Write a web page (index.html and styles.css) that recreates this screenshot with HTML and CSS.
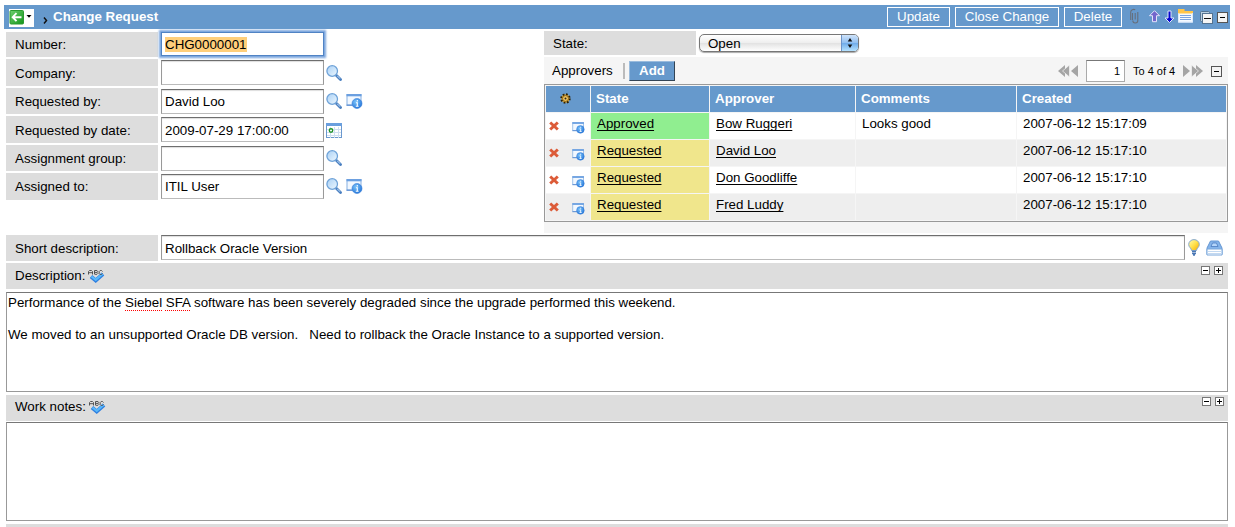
FILE: index.html
```html
<!DOCTYPE html>
<html lang="en">
<head>
<meta charset="utf-8">
<title>Change Request</title>
<link rel="stylesheet" href="styles.css">
</head>
<body>
<svg class="defs" width="0" height="0">
  <defs>
    <linearGradient id="lens" x1="0" y1="0" x2="1" y2="1"><stop offset="0" stop-color="#a9d0f5"/><stop offset="1" stop-color="#eef8ff"/></linearGradient>
    <linearGradient id="green" x1="0" y1="0" x2="1" y2="1"><stop offset="0" stop-color="#6fd070"/><stop offset="1" stop-color="#12941a"/></linearGradient>
    <radialGradient id="info" cx=".4" cy=".35" r=".7"><stop offset="0" stop-color="#7cc4fa"/><stop offset="1" stop-color="#2273d8"/></radialGradient>
    <linearGradient id="bulb" x1="0" y1="0" x2="1" y2="1"><stop offset="0" stop-color="#fffbb0"/><stop offset=".5" stop-color="#ffe04a"/><stop offset="1" stop-color="#f5a800"/></linearGradient>
    <symbol id="i-search" viewBox="0 0 16 16"><path d="M10.500 10.500l4 3.900" stroke="#4a7fc0" stroke-width="2.800" stroke-linecap="round"/><path d="M11.200 10.800l3 2.900" stroke="#9fc3ea" stroke-width="1.100"/><circle cx="6.200" cy="6" r="5.300" fill="url(#lens)" stroke="#6ea2d8" stroke-width="1.300"/></symbol>
    <symbol id="i-info" viewBox="0 0 17 16"><rect x="1" y="1.500" width="14" height="10.500" fill="#f2f8ff" stroke="#86b0e2"/><path d="M.5 2.200h15" stroke="#6a9fe0" stroke-width="2.200"/><path d="M.5 12.200h6" stroke="#4a80cc"/><circle cx="11" cy="10.500" r="5" fill="url(#info)" stroke="#3a80d8" stroke-width=".6"/><path d="M11.300 7v1.400M10 9.800h1.300v3.200M9.800 13.200h2.800" stroke="#fff" stroke-width="1.100" fill="none"/></symbol>
    <symbol id="i-spell" viewBox="0 0 17 14"><path d="M3 7.500l4.700 4L15 5" fill="none" stroke="#2f7fe0" stroke-width="3.800"/><path d="M3.500 7.500l4.200 3.300L14.500 5" fill="none" stroke="#58b8fa" stroke-width="2.200"/><path d="M.5 5.500v-3l1-1h2l1 1v3M.5 3.700h4M6.500 5V1.500H9l.7.9-.7 1H6.500M9 3.400l.9 1L9 5.300H6.500M14.500 2.500l-1-1h-1.300l-1 1v2l1 1h1.300l1-1" fill="none" stroke="#555" stroke-width="1"/></symbol>
    <symbol id="i-x" viewBox="0 0 10 10"><path d="M1.200 1.500l7.600 7M8.800 1.500l-7.600 7" stroke="#dc5b38" stroke-width="3"/></symbol>
    <symbol id="i-minus" viewBox="0 0 9 9"><rect x=".5" y=".5" width="8" height="8" fill="#fff" stroke="#777"/><path d="M2 4.500h5" stroke="#000"/></symbol>
    <symbol id="i-plus" viewBox="0 0 9 9"><rect x=".5" y=".5" width="8" height="8" fill="#fff" stroke="#777"/><path d="M2 4.500h5M4.500 2v5" stroke="#000"/></symbol>
    <symbol id="i-box" viewBox="0 0 11 11"><rect x=".5" y=".5" width="10" height="10" fill="#f4f4f4" stroke="#555"/><path d="M3 5.500h5" stroke="#000"/></symbol>
  </defs>
</svg>
<header class="bar">
  <div class="back">
    <svg width="25" height="18" viewBox="0 0 25 18"><rect width="25" height="18" fill="#fff"/><rect x="1" y="1.500" width="13.500" height="13.500" rx="1" fill="url(#green)" stroke="#2a9a30"/><path d="M7.500 4.200L3.700 8.200l3.800 4M4 8.200h8.500" stroke="#fff" stroke-width="1.900" fill="none"/><path d="M17.500 6h5L20 8.800z" fill="#000"/></svg>
  </div>
  <svg class="chev" width="5" height="7" viewBox="0 0 5 7"><path d="M1 .5l2.500 3L1 6.500" fill="none" stroke="#111" stroke-width="1.500"/></svg>
  <h1 class="title">Change Request</h1>
  <button class="action update">Update</button>
  <button class="action close">Close Change</button>
  <button class="action delete">Delete</button>
  <svg class="tools" width="102" height="18" viewBox="0 0 102 18">
    <path d="M4.500 5v7M9.800 4v8.500a2.500 2.500 0 0 1-5 0M2.700 12V4a3 3 0 0 1 4.500-2.200M7.200 5v6.500" fill="none" stroke="#666f7c" stroke-width="1.100"/>
    <path d="M26.500 2.700l5 5h-3v6h-4v-6h-3z" fill="#7366cc" stroke="#e4e2fa"/>
    <path d="M41.500 14.500l-4.500-4.500h3v-7h3v7h3z" fill="#0606d0" stroke="#e0e6fa"/>
    <rect x="50" y="3" width="15" height="11.500" fill="#f6faff"/><path d="M50 1h6.500v2H65v2.500H50z" fill="#ffc54a"/><path d="M50.500 5.500v8.500h14V5" fill="none" stroke="#dbe9fb"/><path d="M52 7.500h11M52 9.500h11M52 11.500h11" stroke="#7ba4e0"/>
    <rect x="72.500" y="3.500" width="9" height="10" rx="1" fill="#b9cfe0" stroke="#547391"/><rect x="74.500" y="5.500" width="10" height="10" fill="#f4f4f4" stroke="#547391"/><path d="M76 10.500h7" stroke="#111"/>
    <rect x="89.500" y="4.500" width="10" height="10" fill="#f4f4f4" stroke="#555"/><path d="M92 9.500h5" stroke="#000"/>
  </svg>
</header>

<main class="form">
  <div class="columns">
    <section class="fields">
      <div class="field r1"><label class="label">Number:</label><div class="input focus"><span class="sel">CHG0000001</span></div></div>
      <div class="field r2"><label class="label">Company:</label><div class="input"></div><svg class="ico"><use href="#i-search"/></svg></div>
      <div class="field r3"><label class="label">Requested by:</label><div class="input">David Loo</div><svg class="ico"><use href="#i-search"/></svg><svg class="ico info"><use href="#i-info"/></svg></div>
      <div class="field r4"><label class="label">Requested by date:</label><div class="input">2009-07-29 17:00:00</div><svg class="ico date" viewBox="0 0 16 16"><rect x=".5" y=".5" width="15" height="14" fill="#fff" stroke="#6a98cf"/><path d="M0 1.500h16" stroke="#6a9fde" stroke-width="3"/><path d="M1 6.500h14M1 9.500h14M1 12.500h14M4.500 4v11M8.500 4v11M12.500 4v11" stroke="#cfdff0"/><circle cx="5" cy="7.500" r="1.700" fill="#fff" stroke="#22932a" stroke-width="1.400"/></svg></div>
      <div class="field r5"><label class="label">Assignment group:</label><div class="input"></div><svg class="ico"><use href="#i-search"/></svg></div>
      <div class="field r6"><label class="label">Assigned to:</label><div class="input">ITIL User</div><svg class="ico"><use href="#i-search"/></svg><svg class="ico info"><use href="#i-info"/></svg></div>
    </section>

    <section class="side">
      <div class="state"><label class="label">State:</label>
        <div class="select"><span class="value">Open</span><span class="knob"><svg width="8" height="12" viewBox="0 0 8 12"><path d="M4 1L6.300 4.500H1.700zM4 11L6.300 7.500H1.700z" fill="#111"/></svg></span></div>
      </div>
      <div class="approvers">
        <div class="listbar">
          <span class="name">Approvers</span><span class="sep"></span><button class="add">Add</button>
          <div class="pager">
            <svg width="21" height="12" viewBox="0 0 21 12"><path d="M7 0v12L0 6zM20 0v12L13 6z" fill="#a5a5a5"/><path d="M11.500 0v12L4.500 6z" fill="#a5a5a5" stroke="#f5f5f5" stroke-width=".7"/></svg>
            <span class="page">1</span><span class="count">To 4 of 4</span>
            <svg width="21" height="12" viewBox="0 0 21 12"><path d="M14 0v12l7-6z" fill="#a5a5a5"/><path d="M9.500 0v12l7-6z" fill="#a5a5a5" stroke="#f5f5f5" stroke-width=".7"/><path d="M1 0v12l7-6z" fill="#a5a5a5"/></svg>
            <svg class="fold" width="11" height="11"><use href="#i-box"/></svg>
          </div>
        </div>
        <div class="table">
          <div class="th gear"><svg width="11" height="11" viewBox="0 0 11 11"><circle cx="5.500" cy="5.500" r="4.200" fill="#d9a22c" stroke="#2c2006" stroke-width="2" stroke-dasharray="1.700 1.600"/><circle cx="5.500" cy="5.500" r="2.900" fill="#f5c65c" stroke="#6b4c10" stroke-width=".7"/><circle cx="5.500" cy="5.500" r="1" fill="#222"/></svg></div>
          <div class="th">State</div><div class="th">Approver</div><div class="th">Comments</div><div class="th">Created</div>

          <div class="td acts"><svg class="x"><use href="#i-x"/></svg><svg class="i"><use href="#i-info"/></svg></div>
          <div class="td approved"><a>Approved</a></div><div class="td"><a>Bow Ruggeri</a></div><div class="td">Looks good</div><div class="td">2007-06-12 15:17:09</div>

          <div class="td alt acts"><svg class="x"><use href="#i-x"/></svg><svg class="i"><use href="#i-info"/></svg></div>
          <div class="td requested"><a>Requested</a></div><div class="td alt"><a>David Loo</a></div><div class="td alt"></div><div class="td alt">2007-06-12 15:17:10</div>

          <div class="td acts"><svg class="x"><use href="#i-x"/></svg><svg class="i"><use href="#i-info"/></svg></div>
          <div class="td requested"><a>Requested</a></div><div class="td"><a>Don Goodliffe</a></div><div class="td"></div><div class="td">2007-06-12 15:17:10</div>

          <div class="td alt acts"><svg class="x"><use href="#i-x"/></svg><svg class="i"><use href="#i-info"/></svg></div>
          <div class="td requested"><a>Requested</a></div><div class="td alt"><a>Fred Luddy</a></div><div class="td alt"></div><div class="td alt">2007-06-12 15:17:10</div>
        </div>
      </div>
    </section>
  </div>

  <div class="field short"><label class="label">Short description:</label><div class="input wide">Rollback Oracle Version</div>
    <svg class="bulb" width="12" height="17" viewBox="0 0 12 17"><path d="M3.500 11.500C3.500 9 .7 8.500.7 5.500a5.300 4.900 0 0 1 10.600 0c0 3-2.800 3.500-2.800 6z" fill="url(#bulb)" stroke="#86a9d0"/><path d="M4 12.500h4M4 14.500h4M5 16h2" stroke="#4b78b5" stroke-width="1.300"/></svg>
    <svg class="book" width="17" height="16" viewBox="0 0 17 16"><path d="M4.500 1h8l3.500 7v6.500H1V8z" fill="#84b4ea" stroke="#6496d2"/><path d="M1 9h15v6H1z" fill="#fff" stroke="#7aa8dc"/><path d="M2 11.500h14M2 13.500h14" stroke="#c3d9f1"/><path d="M5 6.500L6.500 3h4L12 6.500z" fill="#b5d6fa" stroke="#4b7cc0" stroke-width=".8"/></svg>
  </div>

  <div class="section first"><span>Description:</span><svg class="spell"><use href="#i-spell"/></svg>
    <div class="sizer"><svg width="9" height="9"><use href="#i-minus"/></svg><svg width="9" height="9"><use href="#i-plus"/></svg></div></div>
  <div class="area desc"><p class="line">Performance of the <span class="miss">Siebel</span> <span class="miss">SFA</span> software has been severely degraded since the upgrade performed this weekend.</p><p class="line">We moved to an unsupported Oracle DB version.   Need to rollback the Oracle Instance to a supported version.</p></div>

  <div class="section second"><span>Work notes:</span><svg class="spell"><use href="#i-spell"/></svg>
    <div class="sizer"><svg width="9" height="9"><use href="#i-minus"/></svg><svg width="9" height="9"><use href="#i-plus"/></svg></div></div>
  <div class="area notes"></div>
  <div class="section rest"></div>
</main>
</body>
</html>
```
FILE: styles.css
```css
* { box-sizing: border-box; }
html, body { height: 527px; overflow: hidden; }
body { margin: 0; padding: 5px 5px 0 4px; background: #fff; color: #000; font: 13.333px/16px "Liberation Sans", Arial, sans-serif; }
svg { display: block; flex: none; }
.defs { position: absolute; }
button { font: inherit; margin: 0; padding: 0; border-radius: 0; }

.bar { display: flex; height: 24px; background: #69c; color: #fff; padding-left: 5px; }
.back { margin-top: 4px; width: 25px; }
.chev { margin: 12px 5px 0 9px; }
.title { margin: 0; padding-top: 4px; font-size: 13.333px; line-height: 16px; flex: 1; }
.action { height: 20px; margin: 2px 5px 0 0; background: #69c; border: 1px solid #fff; color: #fff; }
.update { width: 63px; }
.close { width: 104px; }
.delete { width: 58px; margin-right: 6px; }
.tools { margin-top: 3px; }

.form { padding: 2px 2px 0; width: 1226px; }
.columns { display: flex; height: 204px; }
.fields { width: 538px; padding-top: 1px; }
.field { display: flex; margin-bottom: 2px; }
.r1 { height: 25px; }
.r2, .r4, .r6 { height: 27px; }
.r3, .r5 { height: 26px; }
.label { width: 152px; background: #ddd; padding-left: 9px; display: flex; align-items: center; flex: none; }
.r3 .label, .r5 .label, .short .label { padding-top: 1px; }
.r2 .label, .r4 .label { padding-top: 2px; }
.input { width: 163px; height: 25px; margin: 1px 0 0 3px; border: 1px solid #bbb; border-top: 1px solid #6e6e6e; border-left-color: #999; border-right-color: #999; padding: 4px 3px 0; background: #fff; box-shadow: inset 0 1px 1px #ddd; white-space: nowrap; flex: none; }
.r4 .input { padding-top: 5px; }
.focus { margin: 0 0 0 3px; height: 24px; border-color: #5083c4; box-shadow: 0 0 2px 2px #79a4dd; }
.sel { background: #ffcf7b; }
.ico { width: 16px; height: 16px; margin: 5px 0 0 2px; }
.r2 .ico { margin-top: 6px; }
.info { width: 17px; margin-left: 4px; }
.date { margin-top: 7px; }

.side { width: 684px; }
.state { display: flex; height: 24px; }
.state .label { padding-top: 1px; }
.select { display: flex; width: 160px; height: 18px; margin: 3px 0 0 3px; border: 1px solid #777; border-radius: 5px; overflow: hidden; background: linear-gradient(#fff, #eee 50%, #e2e2e2 51%, #fff); box-shadow: 0 1px 1px #aaa; }
.value { flex: 1; padding-left: 8px; line-height: 17px; }
.knob { width: 17px; display: flex; align-items: center; justify-content: center; background: linear-gradient(#cfe3fa, #8fbef0 50%, #6fabe9 51%, #b5e2ff); border-left: 1px solid #6c93c8; }
.approvers { margin-top: 2px; height: 176px; background: #f5f5f5; }
.listbar { display: flex; height: 27px; padding-left: 8px; }
.name { width: 71px; padding-top: 6px; }
.sep { width: 2px; height: 16px; margin-top: 6px; background: #bbb; }
.add { width: 46px; height: 20px; margin: 4px 0 0 4px; background: #69c; color: #fff; font-weight: bold; border: 1px solid #9bd; border-right-color: #345; border-bottom-color: #345; }
.pager { margin-left: auto; display: flex; align-items: center; font-size: 11px; padding-right: 6px; }
.page { width: 39px; height: 22px; margin: 0 8px 0 7px; padding: 2px 4px 0 0; text-align: right; background: #fff; border: 1px solid #aaa; border-top-color: #777; }
.count { width: 49px; white-space: nowrap; }
.fold { margin-left: 8px; margin-top: 1px; }
.table { display: grid; grid-template-columns: 44px 118px 145px 160px 209px; grid-template-rows: repeat(5, 26px); gap: 1px; padding: 1px; border: 1px solid #999; background: #f5f5f5; }
.th { background: #69c; color: #fff; font-weight: bold; padding: 5px 5px 0; }
.td { background: #fff; padding: 3px 6px 0; white-space: nowrap; }
.td.alt { background: #eee; }
.td.approved { background: #90ee90; }
.td.requested { background: #f0e68c; }
.td a { text-decoration: underline; text-decoration-skip-ink: none; text-underline-offset: 2px; }
.gear { padding: 7px 0 0 14px; }
.td.acts { display: flex; padding: 8px 0 0 3px; }
.x { width: 10px; height: 10px; }
.i { width: 13px; height: 13px; margin-left: 13px; }

.short { height: 26px; margin: 0; }
.wide { width: 1024px; height: 25px; margin-top: 0; padding-top: 5px; }
.bulb { margin: 4px 0 0 3px; }
.book { margin: 5px 0 0 6px; }
.section { display: flex; height: 26px; background: #ddd; padding: 5px 5px 0 9px; }
.first { margin-top: 2px; }
.spell { width: 17px; height: 14px; margin: 1px 0 0 3px; }
.sizer { display: flex; gap: 4px; margin: -2px 0 0 auto; }
.area { border: 1px solid #999; border-top-color: #777; background: #fff; }
.desc { margin-top: 3px; height: 100px; padding: 2px 1px; }
.line { margin: 0 0 16px; white-space: pre-wrap; }
.miss { text-decoration: underline dotted #f00 1px; text-underline-offset: 3px; text-decoration-skip-ink: none; }
.second { margin-top: 3px; padding-top: 4px; padding-right: 4px; }
.notes { margin-top: 1px; height: 99px; }
.rest { margin-top: 3px; height: 6px; padding: 0; }
```
